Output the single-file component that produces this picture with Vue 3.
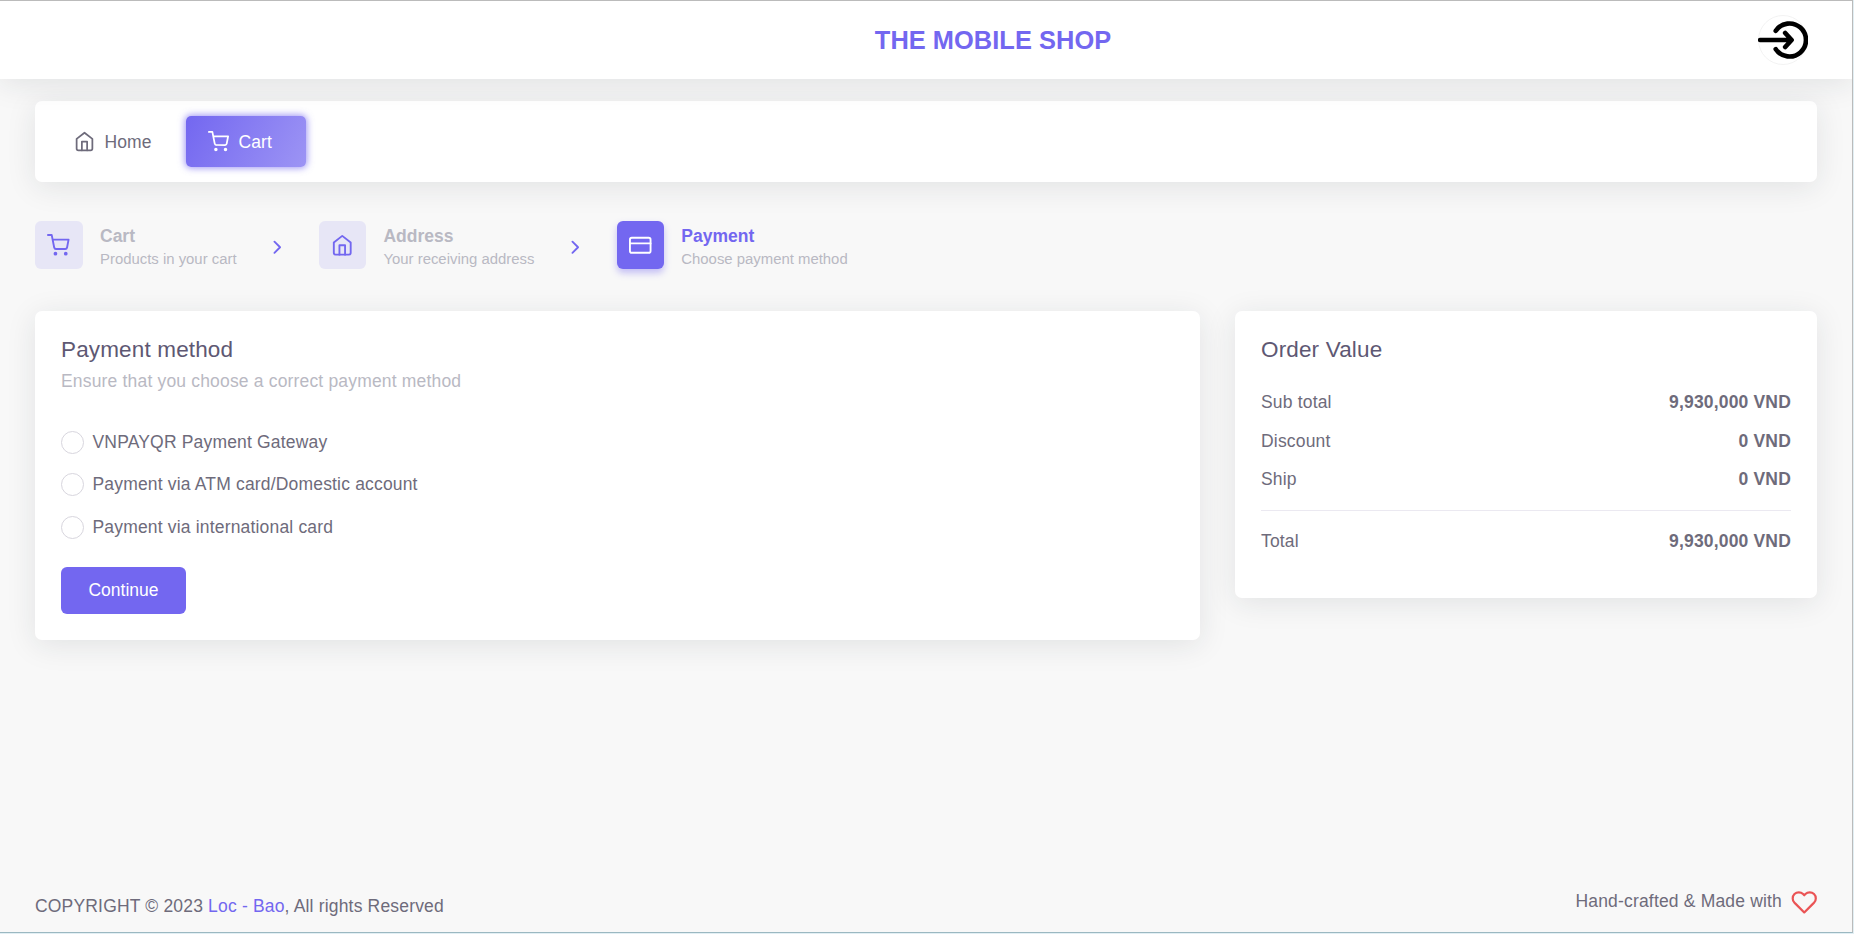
<script setup>
const steps = [
  { icon: 'cart', title: 'Cart', note: 'Products in your cart' },
  { icon: 'home', title: 'Address', note: 'Your receiving address' },
  { icon: 'card', title: 'Payment', note: 'Choose payment method', active: true },
]
const methods = [
  'VNPAYQR Payment Gateway',
  'Payment via ATM card/Domestic account',
  'Payment via international card',
]
const prices = [
  ['Sub total', '9,930,000 VND'],
  ['Discount', '0 VND'],
  ['Ship', '0 VND'],
]
</script>

<template>
  <div class="frame">
    <div class="page">
      <header class="header">
        <span></span>
        <h1 class="brand">THE MOBILE SHOP</h1>
        <svg class="login" viewBox="0 0 50 50">
          <circle class="ring" cx="25" cy="25" r="24.5" />
          <path d="M17.8 15.8A16.5 16.5 0 1 1 17.8 34.2M2.2 25H33M27.2 18L33.6 25L27.2 32" />
        </svg>
      </header>

      <nav class="nav card">
        <a class="nav-item">
          <svg class="icon" viewBox="0 0 24 24"><path d="M3 9l9-7 9 7v11a2 2 0 0 1-2 2H5a2 2 0 0 1-2-2z" /><path d="M9 22V12h6v10" /></svg>
          <span>Home</span>
        </a>
        <a class="nav-item current">
          <svg class="icon" viewBox="0 0 24 24"><circle cx="9" cy="21" r="1" /><circle cx="20" cy="21" r="1" /><path d="M1 1h4l2.68 13.39a2 2 0 0 0 2 1.61h9.72a2 2 0 0 0 2-1.61L23 6H6" /></svg>
          <span>Cart</span>
        </a>
      </nav>

      <div class="steps">
        <template v-for="(s, i) in steps" :key="s.title">
          <svg v-if="i" class="chevron" viewBox="0 0 24 24"><path d="M9 18l6-6-6-6" /></svg>
          <div class="step" :class="{ active: s.active }">
            <div class="box">
              <svg v-if="s.icon === 'cart'" viewBox="0 0 24 24"><circle cx="9" cy="21" r="1" /><circle cx="20" cy="21" r="1" /><path d="M1 1h4l2.68 13.39a2 2 0 0 0 2 1.61h9.72a2 2 0 0 0 2-1.61L23 6H6" /></svg>
              <svg v-else-if="s.icon === 'home'" viewBox="0 0 24 24"><path d="M3 9l9-7 9 7v11a2 2 0 0 1-2 2H5a2 2 0 0 1-2-2z" /><path d="M9 22V12h6v10" /></svg>
              <svg v-else viewBox="0 0 24 24"><rect x="1" y="4" width="22" height="16" rx="2" /><path d="M1 10h22" /></svg>
            </div>
            <div class="step-text">
              <div class="step-title">{{ s.title }}</div>
              <div class="step-note">{{ s.note }}</div>
            </div>
          </div>
        </template>
      </div>

      <main class="content">
        <section class="card payment">
          <h2>Payment method</h2>
          <p class="hint">Ensure that you choose a correct payment method</p>
          <div class="methods">
            <label v-for="m in methods" :key="m" class="method">
              <span class="radio"></span><span>{{ m }}</span>
            </label>
          </div>
          <button class="continue">Continue</button>
        </section>

        <aside class="card order">
          <h2>Order Value</h2>
          <div class="prices">
            <div v-for="p in prices" :key="p[0]" class="row"><span>{{ p[0] }}</span><b>{{ p[1] }}</b></div>
          </div>
          <hr />
          <div class="row total"><span>Total</span><b>9,930,000 VND</b></div>
        </aside>
      </main>

      <footer class="footer">
        <span class="copy">COPYRIGHT © 2023 <a>Loc - Bao</a>, All rights Reserved</span>
        <span class="made"><span>Hand-crafted &amp; Made with</span>
          <svg viewBox="0 0 24 24"><path d="M20.84 4.61a5.5 5.5 0 0 0-7.78 0L12 5.67l-1.06-1.06a5.5 5.5 0 0 0-7.78 7.78l1.06 1.06L12 21.23l7.78-7.78 1.06-1.06a5.5 5.5 0 0 0 0-7.78z" /></svg>
        </span>
      </footer>
    </div>
  </div>
</template>

<style>
body { margin: 0; background: #f8f8f8; overflow: hidden; }
</style>

<style scoped>
* { box-sizing: border-box; }
.frame {
  width: 1854px; height: 934px; padding: 0 1px 1px 0; background: #e2eff4;
  font-family: "Liberation Sans", Arial, sans-serif; font-size: 17.5px; line-height: 25px; color: #6e6b7b;
  letter-spacing: .175px;
}
.page {
  height: 933px; border-top: 1px solid #bbb; border-right: 1px solid #bbb; border-bottom: 1px solid #9bb8c1;
  background: #f8f8f8; display: flex; flex-direction: column; overflow: hidden;
}
h1, h2, p { margin: 0; }
svg { fill: none; stroke: currentColor; stroke-width: 2; stroke-linecap: round; stroke-linejoin: round; flex: none; }
.header {
  height: 78px; flex: none; background: #fff; display: grid; grid-template-columns: 1fr auto 1fr; align-items: center;
  padding: 0 44px 0 178px; box-shadow: 0 5px 30px rgba(34, 41, 47, .1); position: relative;
}
.brand { font-size: 25.4px; line-height: 36px; font-weight: 700; letter-spacing: .05px; color: #7367f0; }
.login { width: 50px; height: 50px; justify-self: end; color: #000; stroke-width: 4.7; }
.ring { stroke: #ececec; stroke-width: .7; }
.card { background: #fff; border-radius: 7px; box-shadow: 0 5px 30px rgba(34, 41, 47, .1); }
.nav { margin: 22px 35px 0; height: 81px; flex: none; padding: 0 23px; display: flex; align-items: center; gap: 11px; letter-spacing: .1px; }
.nav-item { height: 51px; width: 117px; padding: 1px 0 0 16px; display: flex; align-items: center; gap: 9.5px; border-radius: 5px; }
.nav-item.current {
  width: 120px; padding-left: 22px; color: #fff; background: linear-gradient(118deg, #7367f0, rgba(115, 103, 240, .7));
  box-shadow: 0 0 7.5px 1px rgba(115, 103, 240, .7);
}
.icon { width: 21px; height: 21px; margin-top: -1px; }
.steps { margin: 39px 35px 0; height: 48px; flex: none; display: flex; align-items: center; letter-spacing: 0; }
.step { display: flex; gap: 17.5px; }
.box {
  width: 47.5px; height: 47.5px; border-radius: 6px; background: rgba(115, 103, 240, .12); color: #7367f0;
  display: flex; align-items: center; justify-content: center;
}
.step:not(:first-child) { gap: 17px; }
.step:not(:first-child) .box { width: 47.3px; }
.box svg { width: 22.5px; height: 22.5px; margin-right: .5px; }
.active .box { background: #7367f0; color: #fff; box-shadow: 0 4px 7px rgba(115, 103, 240, .4); }
.step-text { padding-top: 3px; color: #b9b9c3; }
.step-title { font-weight: 700; line-height: 25px; }
.step-note { font-size: 14.9px; line-height: 20px; }
.active .step-title { color: #7367f0; }
.chevron { width: 22.5px; height: 22.5px; margin: 4px 30.6px 0 29.5px; color: #7367f0; }
.content { margin: 42px 35px 0; display: grid; grid-template-columns: 1165px 582px; gap: 35px; align-items: start; }
.payment { height: 329px; padding: 25px 26px; }
.order { height: 287px; padding: 25px 26px; }
h2 { font-size: 22.5px; line-height: 27px; font-weight: 400; letter-spacing: .15px; color: #5e5873; }
.hint { margin-top: 6px; color: #b9b9c3; line-height: 25px; }
.methods { margin-top: 37px; display: grid; gap: 20px; }
.method { display: flex; align-items: center; gap: 8.5px; height: 22.6px; }
.radio { width: 23px; height: 23px; border: 1px solid #d8d6de; border-radius: 50%; }
.continue {
  margin-top: 28px; width: 125px; height: 47px; border: 0; border-radius: 6px; background: #7367f0; color: #fff;
  font: inherit; display: block; padding: 0; letter-spacing: 0;
}
.prices { margin-top: 27px; display: grid; gap: 13.5px; }
.row { display: flex; justify-content: space-between; }
hr { margin: 18px 0 18px; border: 0; height: 1px; background: #ebe9f1; }
.footer { margin: auto 35px 0; height: 54px; display: flex; justify-content: space-between; align-items: flex-start; }
.copy { padding-top: 16px; }
.copy a { color: #7367f0; }
.made { display: flex; align-items: flex-start; gap: 9px; padding-top: 11px; }
.made svg { width: 26.5px; height: 26.5px; margin: 0 -.5px 0 0; color: #ea5455; }
</style>
